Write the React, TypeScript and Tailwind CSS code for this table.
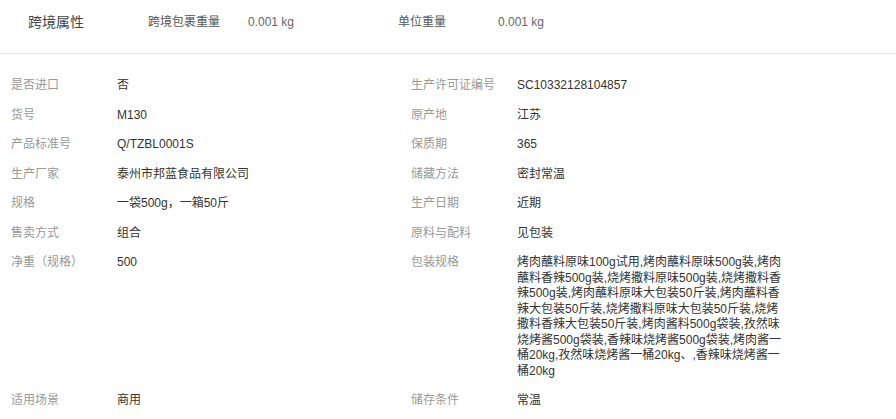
import React from "react";

const rows: [string, string][] = [
  ["是否进口", "否"],
  ["生产许可证编号", "SC10332128104857"],
  ["货号", "M130"],
  ["原产地", "江苏"],
  ["产品标准号", "Q/TZBL0001S"],
  ["保质期", "365"],
  ["生产厂家", "泰州市邦蓝食品有限公司"],
  ["储藏方法", "密封常温"],
  ["规格", "一袋500g，一箱50斤"],
  ["生产日期", "近期"],
  ["售卖方式", "组合"],
  ["原料与配料", "见包装"],
  ["净重（规格）", "500"],
  [
    "包装规格",
    "烤肉蘸料原味100g试用,烤肉蘸料原味500g装,烤肉蘸料香辣500g装,烧烤撒料原味500g装,烧烤撒料香辣500g装,烤肉蘸料原味大包装50斤装,烤肉蘸料香辣大包装50斤装,烧烤撒料原味大包装50斤装,烧烤撒料香辣大包装50斤装,烤肉酱料500g袋装,孜然味烧烤酱500g袋装,香辣味烧烤酱500g袋装,烤肉酱一桶20kg,孜然味烧烤酱一桶20kg、,香辣味烧烤酱一桶20kg",
  ],
  ["适用场景", "商用"],
  ["储存条件", "常温"],
];

export default function App() {
  return (
    <div
      className="w-[896px] bg-white text-[12px]"
      style={{ fontFamily: '"Liberation Sans", "Noto Sans CJK SC", Arial, sans-serif' }}
    >
      <div className="h-[54px] border-b border-[#e8e8e8] flex items-start pt-[13px]">
        <div className="w-[148px] pl-[28px] text-[14px] leading-[18px] text-[#444]">跨境属性</div>
        <div className="w-[100px] leading-[18px] text-[#555]">跨境包裹重量</div>
        <div className="w-[150px] leading-[18px] text-[#666]">0.001 kg</div>
        <div className="w-[100px] leading-[18px] text-[#555]">单位重量</div>
        <div className="leading-[18px] text-[#666]">0.001 kg</div>
      </div>
      <div className="grid grid-cols-[400px_1fr] pl-[11px] pt-[24px]">
        {rows.map(([label, value], i) => (
          <div key={i} className="flex pb-[14px] leading-[15.5px]">
            <div className="w-[106px] shrink-0 text-[#999]">{label}</div>
            <div className="w-[268px] text-[#333] break-all">{value}</div>
          </div>
        ))}
      </div>
    </div>
  );
}
